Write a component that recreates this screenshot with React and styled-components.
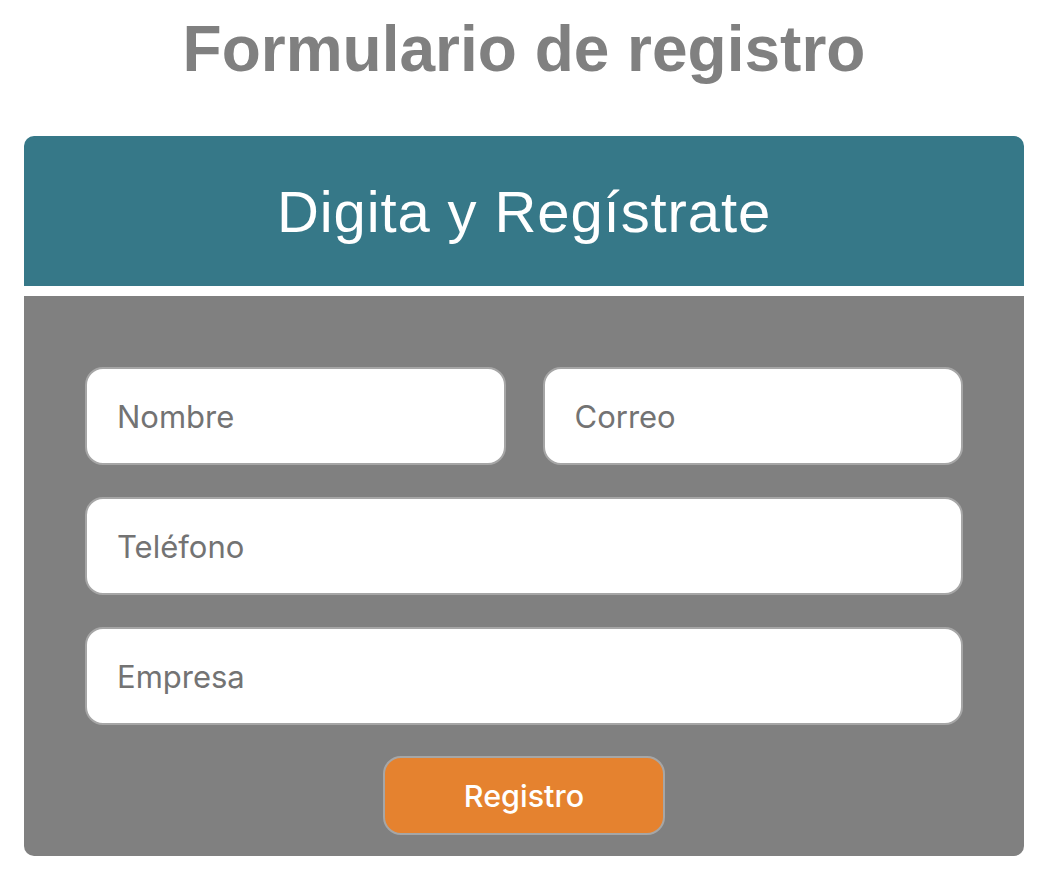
import styled, { createGlobalStyle } from "styled-components";

const GlobalStyle = createGlobalStyle`
  html, body {
    margin: 0;
    padding: 0;
    background: #ffffff;
  }
  * {
    box-sizing: border-box;
  }
`;

const fields = [
  { id: "nombre", placeholder: "Nombre", type: "text", half: true },
  { id: "correo", placeholder: "Correo", type: "email", half: true },
  { id: "telefono", placeholder: "Teléfono", type: "tel" },
  { id: "empresa", placeholder: "Empresa", type: "text" },
];

const App = () => {
  return (
    <Page>
      <GlobalStyle />
      <Title>Formulario de registro</Title>
      <Card>
        <CardHeader>
          <h2>Digita y Regístrate</h2>
        </CardHeader>
        <Form onSubmit={(e) => e.preventDefault()}>
          {fields.map((f) => (
            <Input
              key={f.id}
              id={f.id}
              type={f.type}
              placeholder={f.placeholder}
              $half={f.half}
            />
          ))}
          <SubmitRow>
            <Button type="submit">Registro</Button>
          </SubmitRow>
        </Form>
      </Card>
    </Page>
  );
};

export default App;

const Page = styled.div`
  width: 1054px;
  padding: 0 30px 0 24px;
  display: flex;
  flex-direction: column;
  align-items: stretch;
`;

const Title = styled.h1`
  margin: 12px 0 50px;
  text-align: center;
  font-family: "Liberation Sans", Arial, sans-serif;
  font-weight: bold;
  font-size: 64px;
  line-height: 74px;
  color: #808080;
`;

const Card = styled.div`
  width: 1000px;
  display: flex;
  flex-direction: column;
  gap: 10px;
`;

const CardHeader = styled.div`
  height: 150px;
  background: #367888;
  border-radius: 10px 10px 0 0;
  display: flex;
  align-items: center;
  justify-content: center;

  h2 {
    margin: 0;
    font-family: "Liberation Sans", Arial, sans-serif;
    font-weight: normal;
    font-size: 58px;
    color: #ffffff;
    letter-spacing: 0.9px;
  }
`;

const Form = styled.form`
  background: #808080;
  border-radius: 0 0 10px 10px;
  padding: 71px 61px 21px;
  display: flex;
  flex-wrap: wrap;
  column-gap: 37px;
  row-gap: 32px;
`;

const Input = styled.input`
  width: ${(p) => (p.$half ? "calc(50% - 18.5px)" : "100%")};
  height: 98px;
  padding: 0 30px;
  border: 2px solid #a6a6a6;
  border-radius: 18px;
  background: #ffffff;
  font-family: Inter, "Noto Sans", sans-serif;
  font-size: 31px;
  color: #333;
  outline: none;

  &::placeholder {
    color: #737373;
  }
`;

const SubmitRow = styled.div`
  width: 100%;
  display: flex;
  justify-content: center;
  margin-top: -1px;
`;

const Button = styled.button`
  width: 282px;
  height: 79px;
  background: #e5822f;
  border: 2px solid #a6a6a6;
  border-radius: 18px;
  font-family: Inter, "Noto Sans", sans-serif;
  font-size: 30.5px;
  font-weight: 500;
  color: #ffffff;
  cursor: pointer;
`;
